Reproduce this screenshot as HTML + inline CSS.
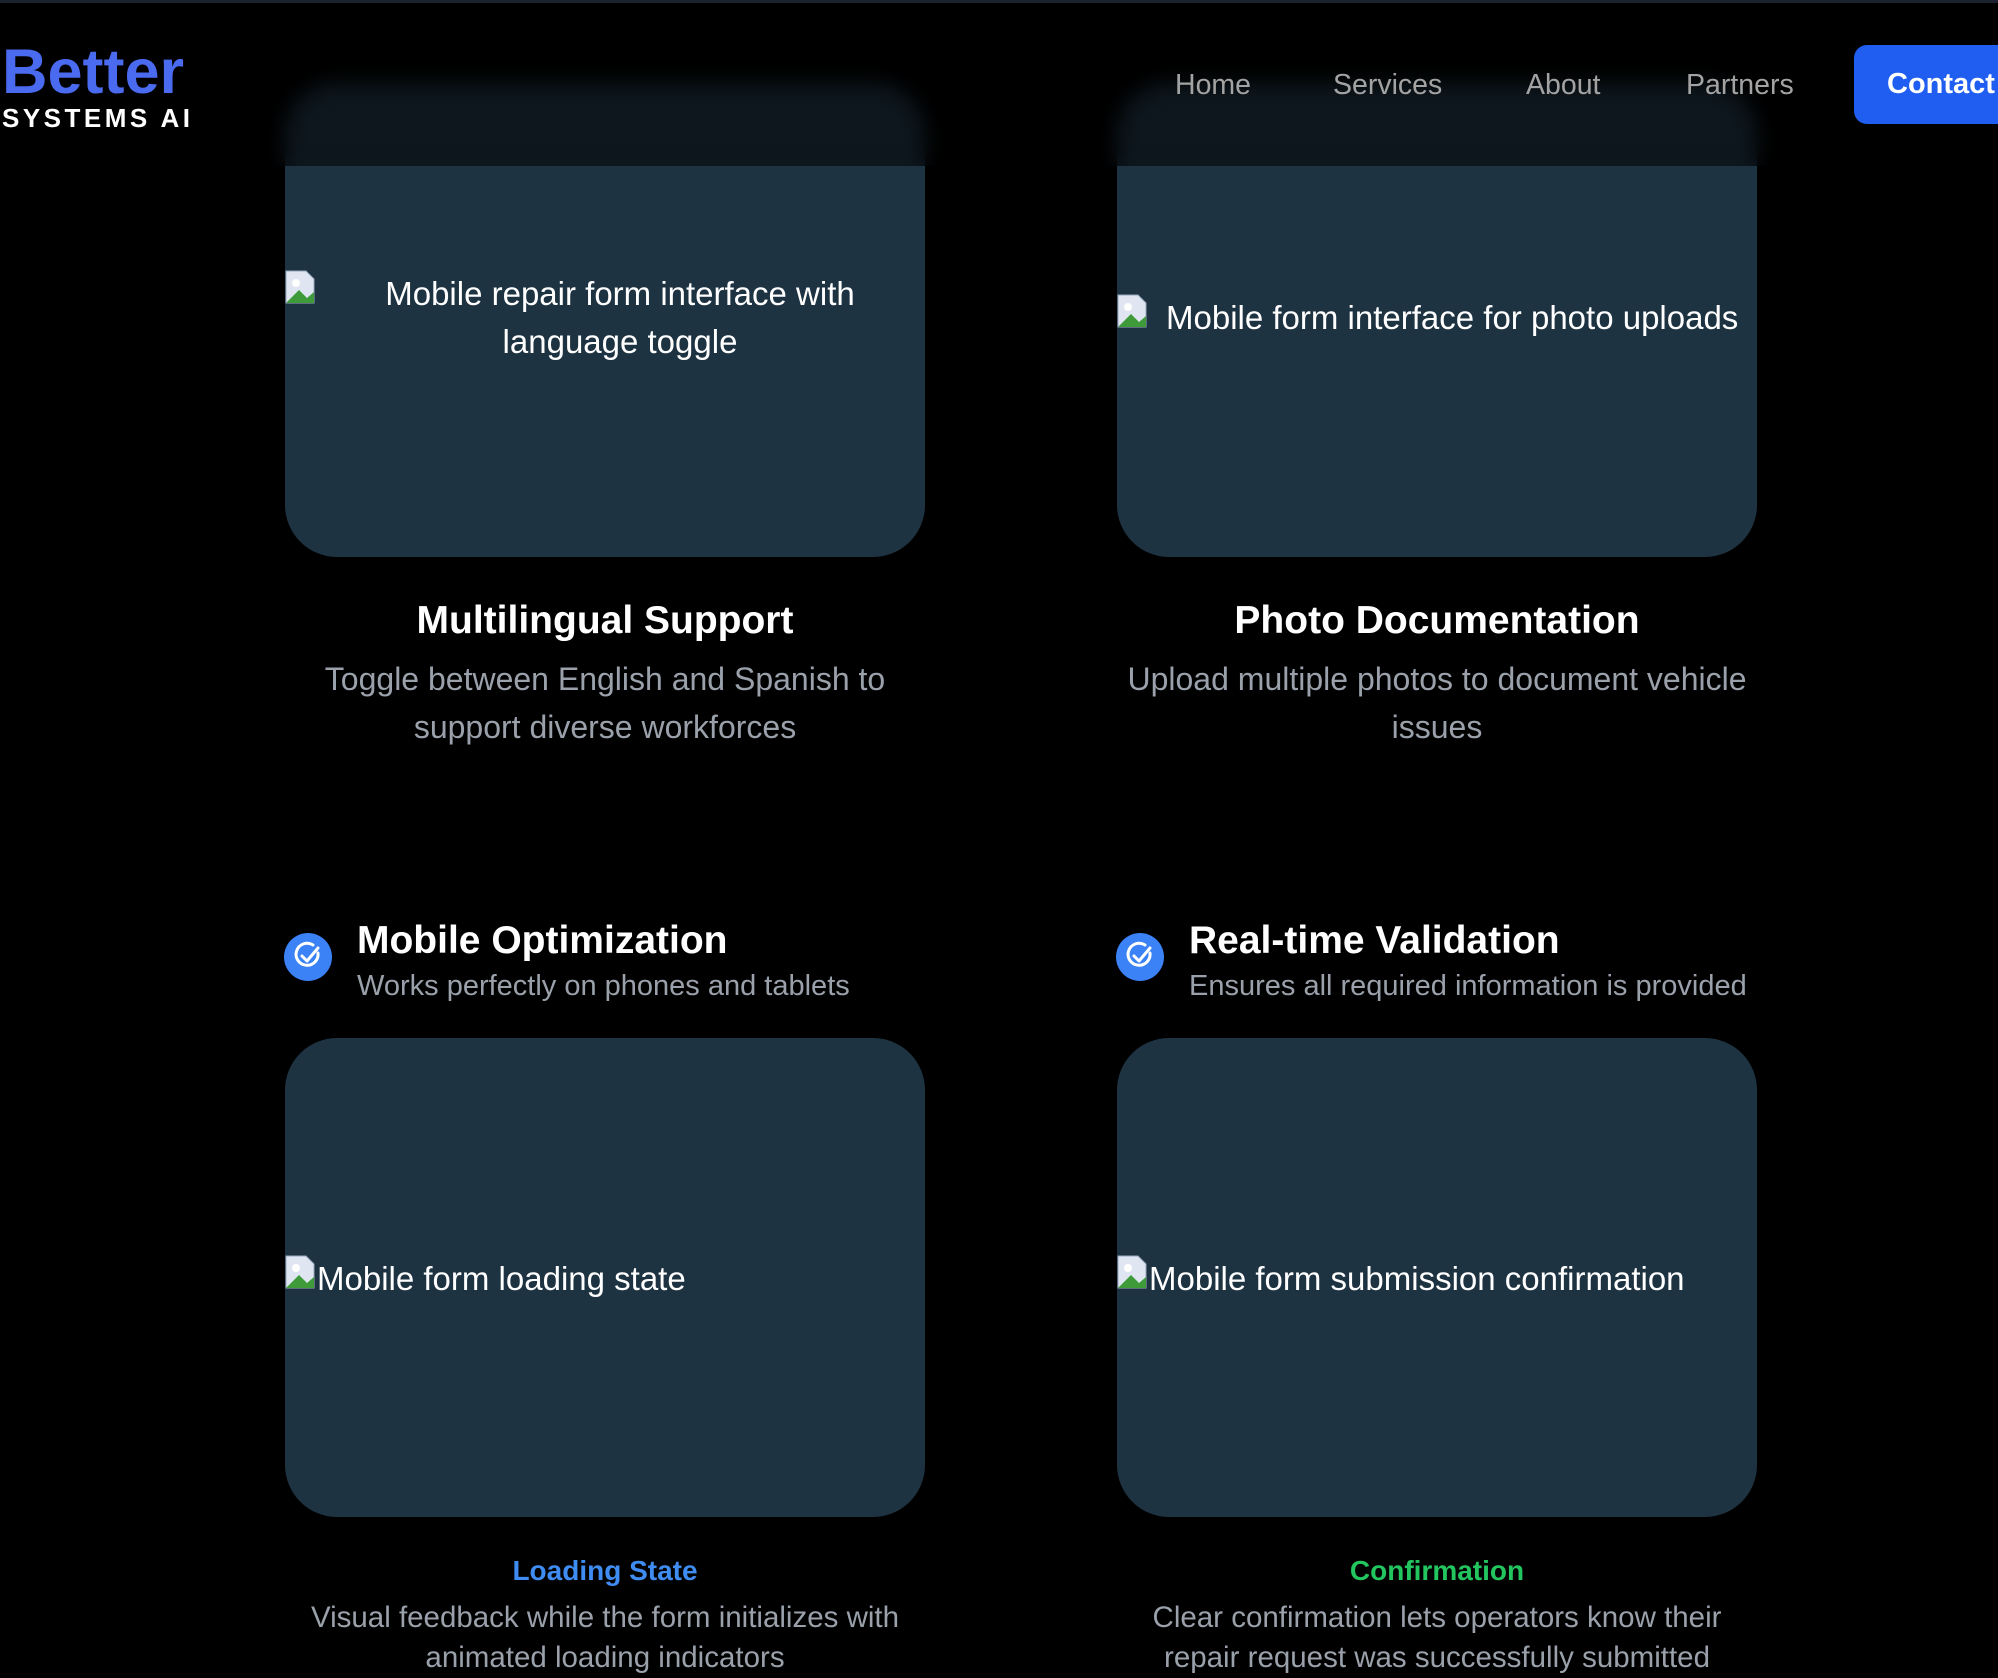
<!DOCTYPE html>
<html><head><meta charset="utf-8">
<style>
*{margin:0;padding:0;box-sizing:border-box}
html,body{width:1998px;height:1656px;overflow:hidden;background:#000;font-family:"Liberation Sans",sans-serif;color:#fff}
.abs{position:absolute}
.card{position:absolute;background:#1e3342;border-radius:52px;overflow:hidden}
.alt{position:absolute;color:#fff;font-size:33px;line-height:48px}
.bi{position:absolute;width:32px;height:34px}
.title{position:absolute;width:640px;text-align:center;font-weight:bold;font-size:39px}
.desc{position:absolute;width:640px;text-align:center;font-size:32px;line-height:48px;color:#9aa1ab}
.ft{position:absolute;font-weight:bold;font-size:39px}
.fs{position:absolute;font-size:29px;color:#9aa1ab}
.chk{position:absolute;width:48px;height:48px}
.lab{position:absolute;width:640px;text-align:center;font-size:28px;font-weight:bold}
header{position:absolute;left:0;top:0;width:1998px;height:166px;background:rgba(0,0,0,0.55);backdrop-filter:blur(10px);-webkit-backdrop-filter:blur(10px);z-index:5;border-top:3px solid #1d2230}
.nav{position:absolute;top:66px;font-size:28.5px;color:#a3a3a3}
</style></head><body>

<div class="card" style="left:285px;top:83px;width:640px;height:474px"></div>
<div class="card" style="left:1117px;top:83px;width:640px;height:474px"></div>

<svg class="bi" style="left:285px;top:270px" viewBox="0 0 32 34"><path d="M1 1h20l8 8v24H1z" fill="#dfe6f2" stroke="#9aa7c0"/><circle cx="11" cy="13" r="4" fill="#fff"/><path d="M1 33L14 20l8 8 7-6v11z" fill="#3f9a3a"/></svg>
<div class="alt" style="left:345px;top:270px;width:550px;text-align:center">Mobile repair form interface with language toggle</div>

<svg class="bi" style="left:1117px;top:294px" viewBox="0 0 32 34"><path d="M1 1h20l8 8v24H1z" fill="#dfe6f2" stroke="#9aa7c0"/><circle cx="11" cy="13" r="4" fill="#fff"/><path d="M1 33L14 20l8 8 7-6v11z" fill="#3f9a3a"/></svg>
<div class="alt" style="left:1166px;top:294px;white-space:nowrap">Mobile form interface for photo uploads</div>

<div class="title" style="left:285px;top:599px">Multilingual Support</div>
<div class="desc" style="left:285px;top:655px">Toggle between English and Spanish to support diverse workforces</div>
<div class="title" style="left:1117px;top:599px">Photo Documentation</div>
<div class="desc" style="left:1117px;top:655px">Upload multiple photos to document vehicle issues</div>

<svg class="chk" style="left:284px;top:933px" viewBox="0 0 48 48"><circle cx="24" cy="24" r="24" fill="#3b82f6"/><path d="M34 20a11 11 0 1 1-5-8" fill="none" stroke="#fff" stroke-width="3" stroke-linecap="round"/><path d="M18 23l5 5 11-13" fill="none" stroke="#fff" stroke-width="3" stroke-linecap="round" stroke-linejoin="round"/></svg>
<div class="ft" style="left:357px;top:919px">Mobile Optimization</div>
<div class="fs" style="left:357px;top:970px">Works perfectly on phones and tablets</div>

<svg class="chk" style="left:1116px;top:933px" viewBox="0 0 48 48"><circle cx="24" cy="24" r="24" fill="#3b82f6"/><path d="M34 20a11 11 0 1 1-5-8" fill="none" stroke="#fff" stroke-width="3" stroke-linecap="round"/><path d="M18 23l5 5 11-13" fill="none" stroke="#fff" stroke-width="3" stroke-linecap="round" stroke-linejoin="round"/></svg>
<div class="ft" style="left:1189px;top:919px">Real-time Validation</div>
<div class="fs" style="left:1189px;top:970px">Ensures all required information is provided</div>

<div class="card" style="left:285px;top:1038px;width:640px;height:479px"></div>
<div class="card" style="left:1117px;top:1038px;width:640px;height:479px"></div>

<svg class="bi" style="left:285px;top:1255px" viewBox="0 0 32 34"><path d="M1 1h20l8 8v24H1z" fill="#dfe6f2" stroke="#9aa7c0"/><circle cx="11" cy="13" r="4" fill="#fff"/><path d="M1 33L14 20l8 8 7-6v11z" fill="#3f9a3a"/></svg>
<div class="alt" style="left:317px;top:1255px;white-space:nowrap">Mobile form loading state</div>
<svg class="bi" style="left:1117px;top:1255px" viewBox="0 0 32 34"><path d="M1 1h20l8 8v24H1z" fill="#dfe6f2" stroke="#9aa7c0"/><circle cx="11" cy="13" r="4" fill="#fff"/><path d="M1 33L14 20l8 8 7-6v11z" fill="#3f9a3a"/></svg>
<div class="alt" style="left:1149px;top:1255px;white-space:nowrap">Mobile form submission confirmation</div>

<div class="lab" style="left:285px;top:1555px;color:#3f8cf2">Loading State</div>
<div class="desc" style="left:285px;top:1598px;font-size:29.5px;line-height:40px">Visual feedback while the form initializes with animated loading indicators</div>
<div class="lab" style="left:1117px;top:1555px;color:#22c55e">Confirmation</div>
<div class="desc" style="left:1147px;width:580px;top:1598px;font-size:29.5px;line-height:40px">Clear confirmation lets operators know their repair request was successfully submitted</div>

<header>
<div class="abs" style="left:2px;top:38px;font-size:63px;font-weight:bold;color:#4a6af0;line-height:1">Better</div>
<div class="abs" style="left:2px;top:102px;font-size:26px;font-weight:bold;color:#fff;letter-spacing:3.5px;line-height:1">SYSTEMS AI</div>
<div class="nav" style="left:1175px">Home</div>
<div class="nav" style="left:1333px">Services</div>
<div class="nav" style="left:1526px">About</div>
<div class="nav" style="left:1686px">Partners</div>
<div class="abs" style="left:1854px;top:42px;width:160px;height:79px;background:#1f5ef0;border-radius:13px"></div>
<div class="abs" style="left:1887px;top:65px;font-size:29px;font-weight:bold;color:#fff">Contact</div>
</header>
</body></html>
